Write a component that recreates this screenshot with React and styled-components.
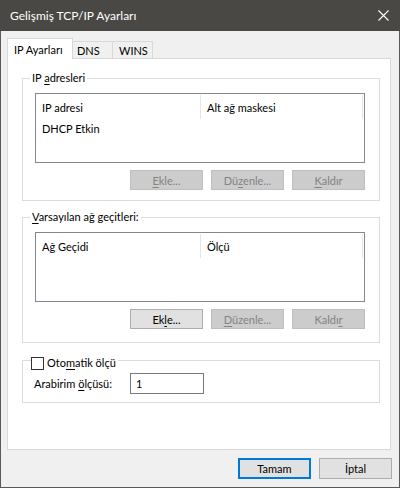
import React from "react";
import styled, { createGlobalStyle } from "styled-components";

const GlobalStyle = createGlobalStyle`
	html, body {
		margin: 0;
		padding: 0;
		background: #f0f0f0;
	}
	* {
		box-sizing: border-box;
	}
`;

const font = `Tahoma, Lato, "Noto Sans", sans-serif`;

function CloseIcon() {
	return (
		<svg width="11" height="11" viewBox="0 0 11 11">
			<path d="M0.5 0.5 L10.5 10.5 M10.5 0.5 L0.5 10.5" stroke="#fff" strokeWidth="1.1" fill="none" />
		</svg>
	);
}

function App() {
	return (
		<Window>
			<GlobalStyle />
			<TitleBar>
				<span>Gelişmiş TCP/IP Ayarları</span>
				<CloseButton>
					<CloseIcon />
				</CloseButton>
			</TitleBar>
			<Body>
				<TabStrip>
					<Tab $active $pad={6}>
						IP Ayarları
					</Tab>
					<Tab $pad={4}>DNS</Tab>
					<Tab $pad={6}>WINS</Tab>
				</TabStrip>
				<Panel>
					<GroupBox $gap={19} $bottom={10}>
						<Legend>
							IP <Key>a</Key>dresleri
						</Legend>
						<ListView>
							<ListHeader>
								<Column $width={165}>IP adresi</Column>
								<Column $width={162}>Alt ağ maskesi</Column>
							</ListHeader>
							<ListRow>DHCP Etkin</ListRow>
						</ListView>
						<ButtonRow>
							<Button disabled>
								<Key>E</Key>kle...
							</Button>
							<Button disabled>
								Dü<Key>z</Key>enle...
							</Button>
							<Button disabled>
								<Key>K</Key>aldır
							</Button>
						</ButtonRow>
					</GroupBox>

					<GroupBox $gap={16} $bottom={13}>
						<Legend>
							<Key>V</Key>arsayılan ağ geçitleri:
						</Legend>
						<ListView>
							<ListHeader>
								<Column $width={165}>Ağ Geçidi</Column>
								<Column $width={162}>Ölçü</Column>
							</ListHeader>
						</ListView>
						<ButtonRow>
							<Button>
								Ek<Key>l</Key>e...
							</Button>
							<Button disabled>
								<Key>D</Key>üzenle...
							</Button>
							<Button disabled>
								Kaldı<Key>r</Key>
							</Button>
						</ButtonRow>
					</GroupBox>

					<GroupBox $gap={17} $bottom={8}>
						<CheckLegend>
							<CheckBox />
							<span>
								Oto<Key>m</Key>atik ölçü
							</span>
						</CheckLegend>
						<FieldRow>
							<FieldLabel>
								Arabirim <Key>ö</Key>lçüsü:
							</FieldLabel>
							<Input defaultValue="1" />
						</FieldRow>
					</GroupBox>
				</Panel>
				<Footer>
					<Button $default>Tamam</Button>
					<Button>İptal</Button>
				</Footer>
			</Body>
		</Window>
	);
}

export default App;

const Window = styled.div`
	width: 400px;
	height: 488px;
	display: flex;
	flex-direction: column;
	border: 1px solid #5a5957;
	border-top: none;
	font-family: ${font};
	font-size: 11px;
	color: #000;
`;

const TitleBar = styled.div`
	height: 31px;
	margin: 0 -1px;
	padding: 0 0 0 10px;
	display: flex;
	align-items: center;
	justify-content: space-between;
	background: #4a4845;
	color: #fff;
	font-family: "Segoe UI", Lato, sans-serif;
	font-size: 12px;
`;

const CloseButton = styled.div`
	width: 46px;
	height: 31px;
	display: flex;
	align-items: center;
	justify-content: center;
	margin-right: -6px;
`;

const Body = styled.div`
	flex: 1;
	display: flex;
	flex-direction: column;
	padding: 7px 7px 8px 6px;
	background: #f0f0f0;
`;

const TabStrip = styled.div`
	height: 20px;
	display: flex;
	align-items: flex-end;
`;

const Tab = styled.div`
	position: relative;
	z-index: ${(p) => (p.$active ? 1 : 0)};
	height: ${(p) => (p.$active ? "21px" : "17px")};
	margin-bottom: ${(p) => (p.$active ? "-1px" : "0")};
	padding: ${(p) => (p.$active ? "3px" : "1px")} 0 0 ${(p) => p.$pad}px;
	width: ${(p) => (p.$active ? "66px" : "40px")};
	display: flex;
	align-items: ${(p) => (p.$active ? "flex-start" : "center")};
	background: ${(p) => (p.$active ? "#fff" : "#f0f0f0")};
	border: 1px solid #d9d9d9;
	border-bottom: none;
	border-left: ${(p) => (p.$active ? "1px solid #d9d9d9" : "none")};
	line-height: 16px;
	white-space: nowrap;
`;

const Panel = styled.div`
	height: 392px;
	margin-right: 1px;
	display: flex;
	flex-direction: column;
	padding: 0 10px 0 14px;
	background: #fff;
	border: 1px solid #d9d9d9;
`;

const GroupBox = styled.div`
	margin-top: ${(p) => p.$gap}px;
	padding: 0 14px ${(p) => p.$bottom}px 12px;
	display: flex;
	flex-direction: column;
	border: 1px solid #dcdcdc;
`;

const Legend = styled.div`
	align-self: flex-start;
	margin: -9px 0 0 -5px;
	padding: 0 2px 0 2px;
	line-height: 16px;
	background: #fff;
	white-space: nowrap;
`;

const CheckLegend = styled.div`
	align-self: flex-start;
	display: flex;
	align-items: center;
	gap: 3px;
	margin: -6px 0 0 -4px;
	padding: 0 2px 0 0;
	height: 16px;
	line-height: 16px;
	background: #fff;
	white-space: nowrap;
`;

const CheckBox = styled.span`
	width: 13px;
	height: 13px;
	border: 1px solid #333;
	background: #fff;
`;

const Key = styled.span`
	text-decoration: underline;
	text-underline-offset: 2px;
`;

const ListView = styled.div`
	height: 70px;
	margin-top: 7px;
	border: 1px solid #828790;
	background: #fff;
`;

const ListHeader = styled.div`
	height: 25px;
	display: flex;
`;

const Column = styled.div`
	width: ${(p) => p.$width}px;
	padding-left: 6px;
	display: flex;
	align-items: center;
	border-right: 1px solid #e5e5e5;
	margin: 1px 0 0;
	white-space: nowrap;
`;

const ListRow = styled.div`
	height: 18px;
	padding-left: 6px;
	display: flex;
	align-items: center;
`;

const ButtonRow = styled.div`
	margin-top: 7px;
	display: flex;
	justify-content: flex-end;
	gap: 8px;
`;

const Button = styled.button`
	width: 73px;
	height: ${(p) => (p.$default ? "21px" : "20px")};
	padding: 0;
	font-family: ${font};
	font-size: 11px;
	color: ${(p) => (p.disabled ? "#838383" : "#000")};
	background: ${(p) => (p.disabled ? "#cccccc" : "#e1e1e1")};
	border: ${(p) =>
		p.$default ? "2px solid #0078d7" : p.disabled ? "1px solid #bfbfbf" : "1px solid #adadad"};
	border-radius: 0;
	outline: none;
`;

const FieldRow = styled.div`
	margin-top: 2px;
	display: flex;
	align-items: center;
`;

const FieldLabel = styled.span`
	width: 96px;
	margin-left: -1px;
	white-space: nowrap;
`;

const Input = styled.input`
	width: 74px;
	height: 21px;
	padding: 0 0 0 5px;
	font-family: ${font};
	font-size: 11px;
	color: #000;
	border: 1px solid #7a7a7a;
	border-radius: 0;
	outline: none;
`;

const Footer = styled.div`
	margin-top: 8px;
	display: flex;
	justify-content: flex-end;
	gap: 8px;
	button {
		height: 21px;
	}
`;
